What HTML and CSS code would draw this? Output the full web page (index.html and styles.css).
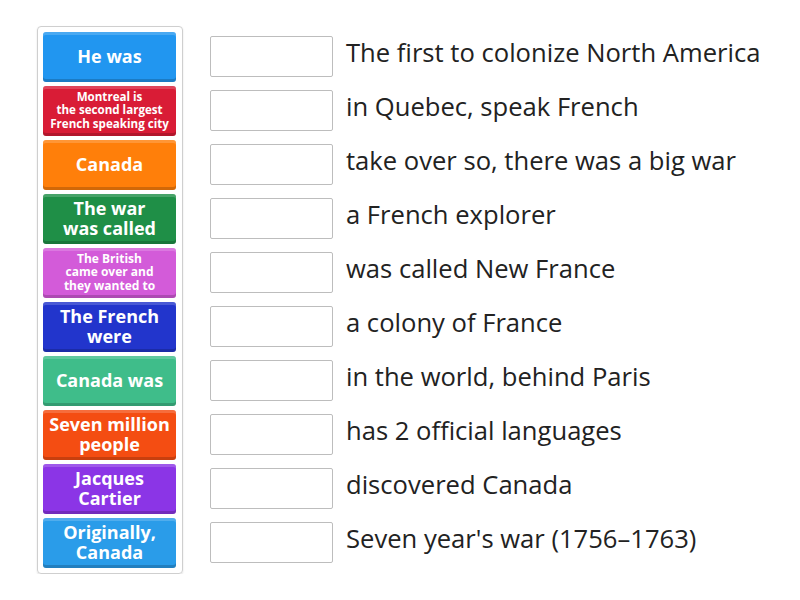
FILE: index.html
```html
<!DOCTYPE html>
<html>
<head>
<meta charset="utf-8">
<link rel="stylesheet" href="styles.css">
</head>
<body>
<div class="page">
  <div class="panel">
    <div class="tile c1"><span>He was</span></div>
    <div class="tile c2 small"><span>Montreal is<br>the second largest<br>French speaking city</span></div>
    <div class="tile c3"><span>Canada</span></div>
    <div class="tile c4"><span>The war<br>was called</span></div>
    <div class="tile c5 tiny"><span>The British<br>came over and<br>they wanted to</span></div>
    <div class="tile c6"><span>The French<br>were</span></div>
    <div class="tile c7"><span>Canada was</span></div>
    <div class="tile c8"><span>Seven million<br>people</span></div>
    <div class="tile c9"><span>Jacques<br>Cartier</span></div>
    <div class="tile c10"><span>Originally,<br>Canada</span></div>
  </div>
  <div class="rows">
    <div class="row"><div class="box"></div><div class="txt">The first to colonize North America</div></div>
    <div class="row"><div class="box"></div><div class="txt">in Quebec, speak French</div></div>
    <div class="row"><div class="box"></div><div class="txt">take over so, there was a big war</div></div>
    <div class="row"><div class="box"></div><div class="txt">a French explorer</div></div>
    <div class="row"><div class="box"></div><div class="txt">was called New France</div></div>
    <div class="row"><div class="box"></div><div class="txt">a colony of France</div></div>
    <div class="row"><div class="box"></div><div class="txt">in the world, behind Paris</div></div>
    <div class="row"><div class="box"></div><div class="txt">has 2 official languages</div></div>
    <div class="row"><div class="box"></div><div class="txt">discovered Canada</div></div>
    <div class="row"><div class="box"></div><div class="txt">Seven year's war (1756–1763)</div></div>
  </div>
</div>
</body>
</html>
```
FILE: styles.css
```css
html, body {
  margin: 0;
  padding: 0;
  background: #fff;
}
body {
  font-family: "Open Sans", "Liberation Sans", sans-serif;
}
.page {
  display: flex;
  align-items: flex-start;
  padding: 26px 0 0 37px;
}
.panel {
  width: 133px;
  padding: 5px 6px 5px 5px;
  border: 1px solid #cfcfcf;
  border-radius: 4px;
  display: flex;
  flex-direction: column;
  gap: 4px;
  box-shadow: 0 1px 2px rgba(0,0,0,0.12);
}
.tile {
  height: 50px;
  border-radius: 3px;
  display: flex;
  align-items: center;
  justify-content: center;
  text-align: center;
  color: #fff;
  font-weight: 700;
  font-size: 18px;
  line-height: 20px;
  box-shadow: inset 0 3px 0 rgba(255,255,255,0.18), inset 0 -3px 0 rgba(0,0,0,0.18);
}
.tile span { display: block; margin-top: -2px; }
.tile.small { font-size: 11.6px; line-height: 13.5px; }
.tile.tiny { font-size: 12px; line-height: 13.5px; }
.c1 { background: #2196f0; }
.c2 { background: #d91c36; }
.c3 { background: #ff7f0a; }
.c4 { background: #1f8f47; }
.c5 { background: #d35bd9; }
.c6 { background: #2235cc; }
.c7 { background: #3fbd8a; }
.c8 { background: #f44d12; }
.c9 { background: #8b35e6; }
.c10 { background: #2a9ce9; }
.rows {
  margin-left: 27px;
  padding-top: 10px;
  display: flex;
  flex-direction: column;
  gap: 13px;
}
.row {
  display: flex;
  align-items: center;
  height: 41px;
}
.box {
  width: 121px;
  height: 39px;
  border: 1px solid #bdbdbd;
  border-radius: 2px;
  background: #fff;
  flex: none;
}
.txt {
  margin-left: 13px;
  font-size: 25.6px;
  line-height: 34px;
  color: #222;
  margin-top: -7px;
  white-space: nowrap;
}
```
